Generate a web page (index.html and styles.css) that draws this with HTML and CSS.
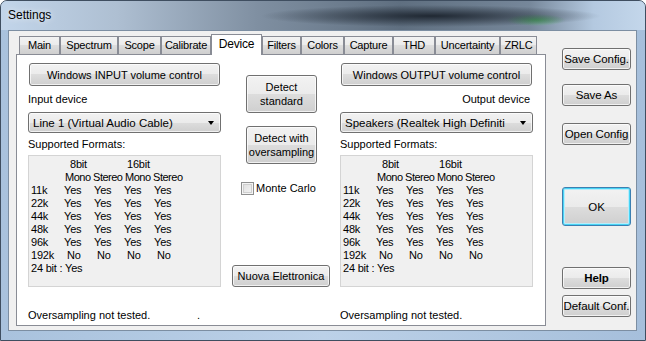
FILE: index.html
```html
<!DOCTYPE html>
<html lang="en">
<head>
    <meta charset="UTF-8">
    <title>Settings</title>
    <link rel="stylesheet" href="styles.css">
</head>
<body>
    <div class="window">
        <div class="titlebar"><span class="title">Settings</span></div>
        <div class="client">
            <div class="tabs-area">
                <div class="tabs">
                    <div class="tab">Main</div>
                    <div class="tab">Spectrum</div>
                    <div class="tab">Scope</div>
                    <div class="tab">Calibrate</div>
                    <div class="tab selected">Device</div>
                    <div class="tab">Filters</div>
                    <div class="tab">Colors</div>
                    <div class="tab">Capture</div>
                    <div class="tab">THD</div>
                    <div class="tab">Uncertainty</div>
                    <div class="tab">ZRLC</div>
                </div>
                <div class="panel">
                    <div class="columns">
                        <!-- input side -->
                        <div class="col">
                            <button class="btn vol-btn">Windows INPUT volume control</button>
                            <div class="label">Input device</div>
                            <div class="combo"><span>Line 1 (Virtual Audio Cable)</span><i class="arrow"></i></div>
                            <div class="label small-gap">Supported Formats:</div>
                            <div class="formats">
                                <span></span><span class="bits8">8bit</span><span class="bits16">16bit</span>
                                <span></span><span class="modes">Mono Stereo Mono Stereo</span>
                                <span>11k</span><span>Yes</span><span>Yes</span><span>Yes</span><span>Yes</span>
                                <span>22k</span><span>Yes</span><span>Yes</span><span>Yes</span><span>Yes</span>
                                <span>44k</span><span>Yes</span><span>Yes</span><span>Yes</span><span>Yes</span>
                                <span>48k</span><span>Yes</span><span>Yes</span><span>Yes</span><span>Yes</span>
                                <span>96k</span><span>Yes</span><span>Yes</span><span>Yes</span><span>Yes</span>
                                <span>192k</span><span class="no">No</span><span class="no">No</span><span class="no">No</span><span class="no">No</span>
                                <span class="full">24 bit : Yes</span>
                            </div>
                        </div>

                        <!-- detect buttons -->
                        <div class="col mid">
                            <button class="btn detect first">Detect<br>standard</button>
                            <button class="btn detect">Detect with<br>oversampling</button>
                            <label class="check"><i class="box"></i>Monte Carlo</label>
                            <button class="btn nuova">Nuova Elettronica</button>
                        </div>

                        <!-- output side -->
                        <div class="col right">
                            <button class="btn vol-btn">Windows OUTPUT volume control</button>
                            <div class="label align-right">Output device</div>
                            <div class="combo"><span>Speakers (Realtek High Definiti</span><i class="arrow"></i></div>
                            <div class="label small-gap">Supported Formats:</div>
                            <div class="formats">
                                <span></span><span class="bits8">8bit</span><span class="bits16">16bit</span>
                                <span></span><span class="modes">Mono Stereo Mono Stereo</span>
                                <span>11k</span><span>Yes</span><span>Yes</span><span>Yes</span><span>Yes</span>
                                <span>22k</span><span>Yes</span><span>Yes</span><span>Yes</span><span>Yes</span>
                                <span>44k</span><span>Yes</span><span>Yes</span><span>Yes</span><span>Yes</span>
                                <span>48k</span><span>Yes</span><span>Yes</span><span>Yes</span><span>Yes</span>
                                <span>96k</span><span>Yes</span><span>Yes</span><span>Yes</span><span>Yes</span>
                                <span>192k</span><span class="no">No</span><span class="no">No</span><span class="no">No</span><span class="no">No</span>
                                <span class="full">24 bit : Yes</span>
                            </div>
                        </div>
                    </div>
                    <div class="status">
                        <span>Oversampling not tested.</span>
                        <span>.</span>
                        <span>Oversampling not tested.</span>
                    </div>
                </div>
            </div>

            <div class="side">
                <button class="btn side-btn">Save Config.</button>
                <button class="btn side-btn">Save As</button>
                <button class="btn side-btn">Open Config</button>
                <button class="btn side-btn ok">OK</button>
                <button class="btn side-btn help">Help</button>
                <button class="btn side-btn default">Default Conf.</button>
            </div>
        </div>
    </div>
</body>
</html>
```

FILE: styles.css
```css
* {
    margin: 0;
    padding: 0;
    box-sizing: border-box;
}

body {
    font-family: "Liberation Sans", Arial, sans-serif;
    font-size: 11px;
    color: #000;
    background: #ffffff;
}

/* Aero style window frame */
.window {
    width: 646px;
    height: 341px;
    border: 1px solid #3f4e60;
    border-radius: 7px 7px 0 0;
    background: linear-gradient(to right, #a9c2dd, #bcd1e8 50%, #a6bfdb);
    display: flex;
    flex-direction: column;
    overflow: hidden;
}

.titlebar {
    height: 29px;
    padding-left: 7px;
    display: flex;
    align-items: center;
    background:
        radial-gradient(ellipse 170px 11px at 430px 15px, rgba(28, 36, 46, 0.95), rgba(28, 36, 46, 0)),
        radial-gradient(ellipse 30px 6px at 535px 19px, rgba(70, 170, 90, 0.8), rgba(70, 170, 90, 0)),
        linear-gradient(to right, #c2d5ea 0%, #aebfd2 18%, #7f8fa1 40%, #5f6f80 62%, #76879a 82%, #b4c9e0 92%, #c4d7eb 100%);
}

.title {
    font-size: 12px;
    padding-bottom: 2px;
    text-shadow: 0 0 6px rgba(255, 255, 255, 0.9);
}

.client {
    flex: 1;
    margin: 0 8px 9px 7px;
    border: 1px solid #7c8ea2;
    background: #f0f0f0;
    display: flex;
}

/* tabs */
.tabs-area {
    margin-left: 7px;
    width: 530px;
    padding-top: 3px;
}

.tabs {
    display: flex;
    align-items: flex-end;
    height: 20px;
    padding-left: 3px;
}

.tab {
    height: 18px;
    line-height: 17px;
    border: 1px solid #898c95;
    border-bottom: none;
    background: linear-gradient(#f2f2f2, #ebebeb 50%, #dddddd 50%, #cfcfcf);
    white-space: nowrap;
    text-align: center;
    letter-spacing: -0.2px;
}

.tab:nth-child(1) { width: 41px; }
.tab:nth-child(2) { width: 58px; }
.tab:nth-child(3) { width: 43px; }
.tab:nth-child(4) { width: 50px; }
.tab:nth-child(5) { width: 51px; }
.tab:nth-child(6) { width: 39px; }
.tab:nth-child(7) { width: 43px; }
.tab:nth-child(8) { width: 49px; }
.tab:nth-child(9) { width: 42px; }
.tab:nth-child(10) { width: 65px; }
.tab:nth-child(11) { width: 37px; }

.tab.selected {
    height: 21px;
    line-height: 18px;
    margin-bottom: -1px;
    font-size: 12px;
    background: #ffffff;
    position: relative;
    z-index: 1;
}

.panel {
    height: 272px;
    border: 1px solid #898c95;
    background: #ffffff;
    padding: 8px 0 0 11px;
}

.columns {
    display: flex;
    height: 224px;
}

.col {
    width: 193px;
    display: flex;
    flex-direction: column;
}

.col.mid {
    width: 98px;
    margin: 0 10px 0 11px;
}

/* buttons */
.btn {
    font-family: "Liberation Sans", Arial, sans-serif;
    font-size: 11px;
    color: #000;
    border: 1px solid #707070;
    border-radius: 3px;
    background: linear-gradient(#f2f2f2, #ebebeb 50%, #dddddd 50%, #cfcfcf);
    box-shadow: inset 0 0 0 1px rgba(255, 255, 255, 0.7);
}

.vol-btn {
    height: 23px;
    width: 191px;
    margin-left: 1px;
}

.label {
    margin-top: 7px;
    line-height: 13px;
}

.label.small-gap {
    margin-top: 5px;
}

.label.align-right {
    text-align: right;
    padding-right: 3px;
}

.combo {
    margin-top: 6px;
    height: 21px;
    border: 1px solid #707070;
    border-radius: 3px;
    background: linear-gradient(#f2f2f2, #ebebeb 50%, #dddddd 50%, #cfcfcf);
    box-shadow: inset 0 0 0 1px rgba(255, 255, 255, 0.7);
    display: flex;
    align-items: center;
    justify-content: space-between;
    padding: 0 6px 0 4px;
    font-size: 11.5px;
}

.arrow {
    width: 0;
    height: 0;
    border-left: 3.5px solid transparent;
    border-right: 3.5px solid transparent;
    border-top: 4px solid #000;
}

.formats {
    margin-top: 4px;
    height: 132px;
    border: 1px solid #d4d4d4;
    background: #f0f0f0;
    padding: 2px 0 0 2px;
    display: grid;
    grid-template-columns: 33px 30px 30px 30px 30px;
    grid-auto-rows: 13px;
    align-content: start;
    line-height: 13px;
    letter-spacing: -0.2px;
}

.formats .bits8 {
    grid-column: span 2;
    padding-left: 6px;
}

.formats .bits16 {
    grid-column: span 2;
    padding-left: 3px;
}

.formats .modes {
    grid-column: span 4;
    padding-left: 1px;
    letter-spacing: -0.5px;
    white-space: nowrap;
}

.formats .no {
    padding-left: 3px;
}

.formats .full {
    grid-column: span 5;
}

/* middle column */
.detect {
    width: 71px;
    height: 38px;
    margin: 13px 0 0 14px;
    line-height: 14px;
}

.detect.first {
    margin-top: 12px;
}

.check {
    margin: 16px 0 0 9px;
    height: 16px;
    display: flex;
    align-items: center;
    gap: 2px;
}

.box {
    width: 13px;
    height: 13px;
    border: 1px solid #8e8f8f;
    background: linear-gradient(135deg, #dcdcdc, #f6f6f6);
    box-shadow: inset 0 0 0 1px #f4f4f4, inset 0 0 0 2px #cfcfcf;
}

.nuova {
    margin-top: auto;
    height: 22px;
}

.status {
    margin-top: 22px;
    display: grid;
    grid-template-columns: 169px 143px auto;
    line-height: 13px;
}

/* right hand button column */
.side {
    margin-left: 16px;
    width: 69px;
    padding-top: 17px;
    display: flex;
    flex-direction: column;
}

.side-btn {
    height: 22px;
    font-size: 11.5px;
    margin-top: 14px;
    white-space: nowrap;
    letter-spacing: -0.1px;
}

.side-btn:first-child {
    margin-top: 0;
}

.side-btn:nth-child(3) {
    margin-top: 17px;
}

.side-btn.ok {
    height: 39px;
    margin-top: 42px;
    border-color: #3c7fb1;
    box-shadow: inset 0 0 0 1px #48d4f5, inset 0 0 0 2px #b9ecfa;
}

.side-btn.help {
    margin-top: 41px;
    font-weight: bold;
}

.side-btn.default {
    margin-top: 6px;
}
```
